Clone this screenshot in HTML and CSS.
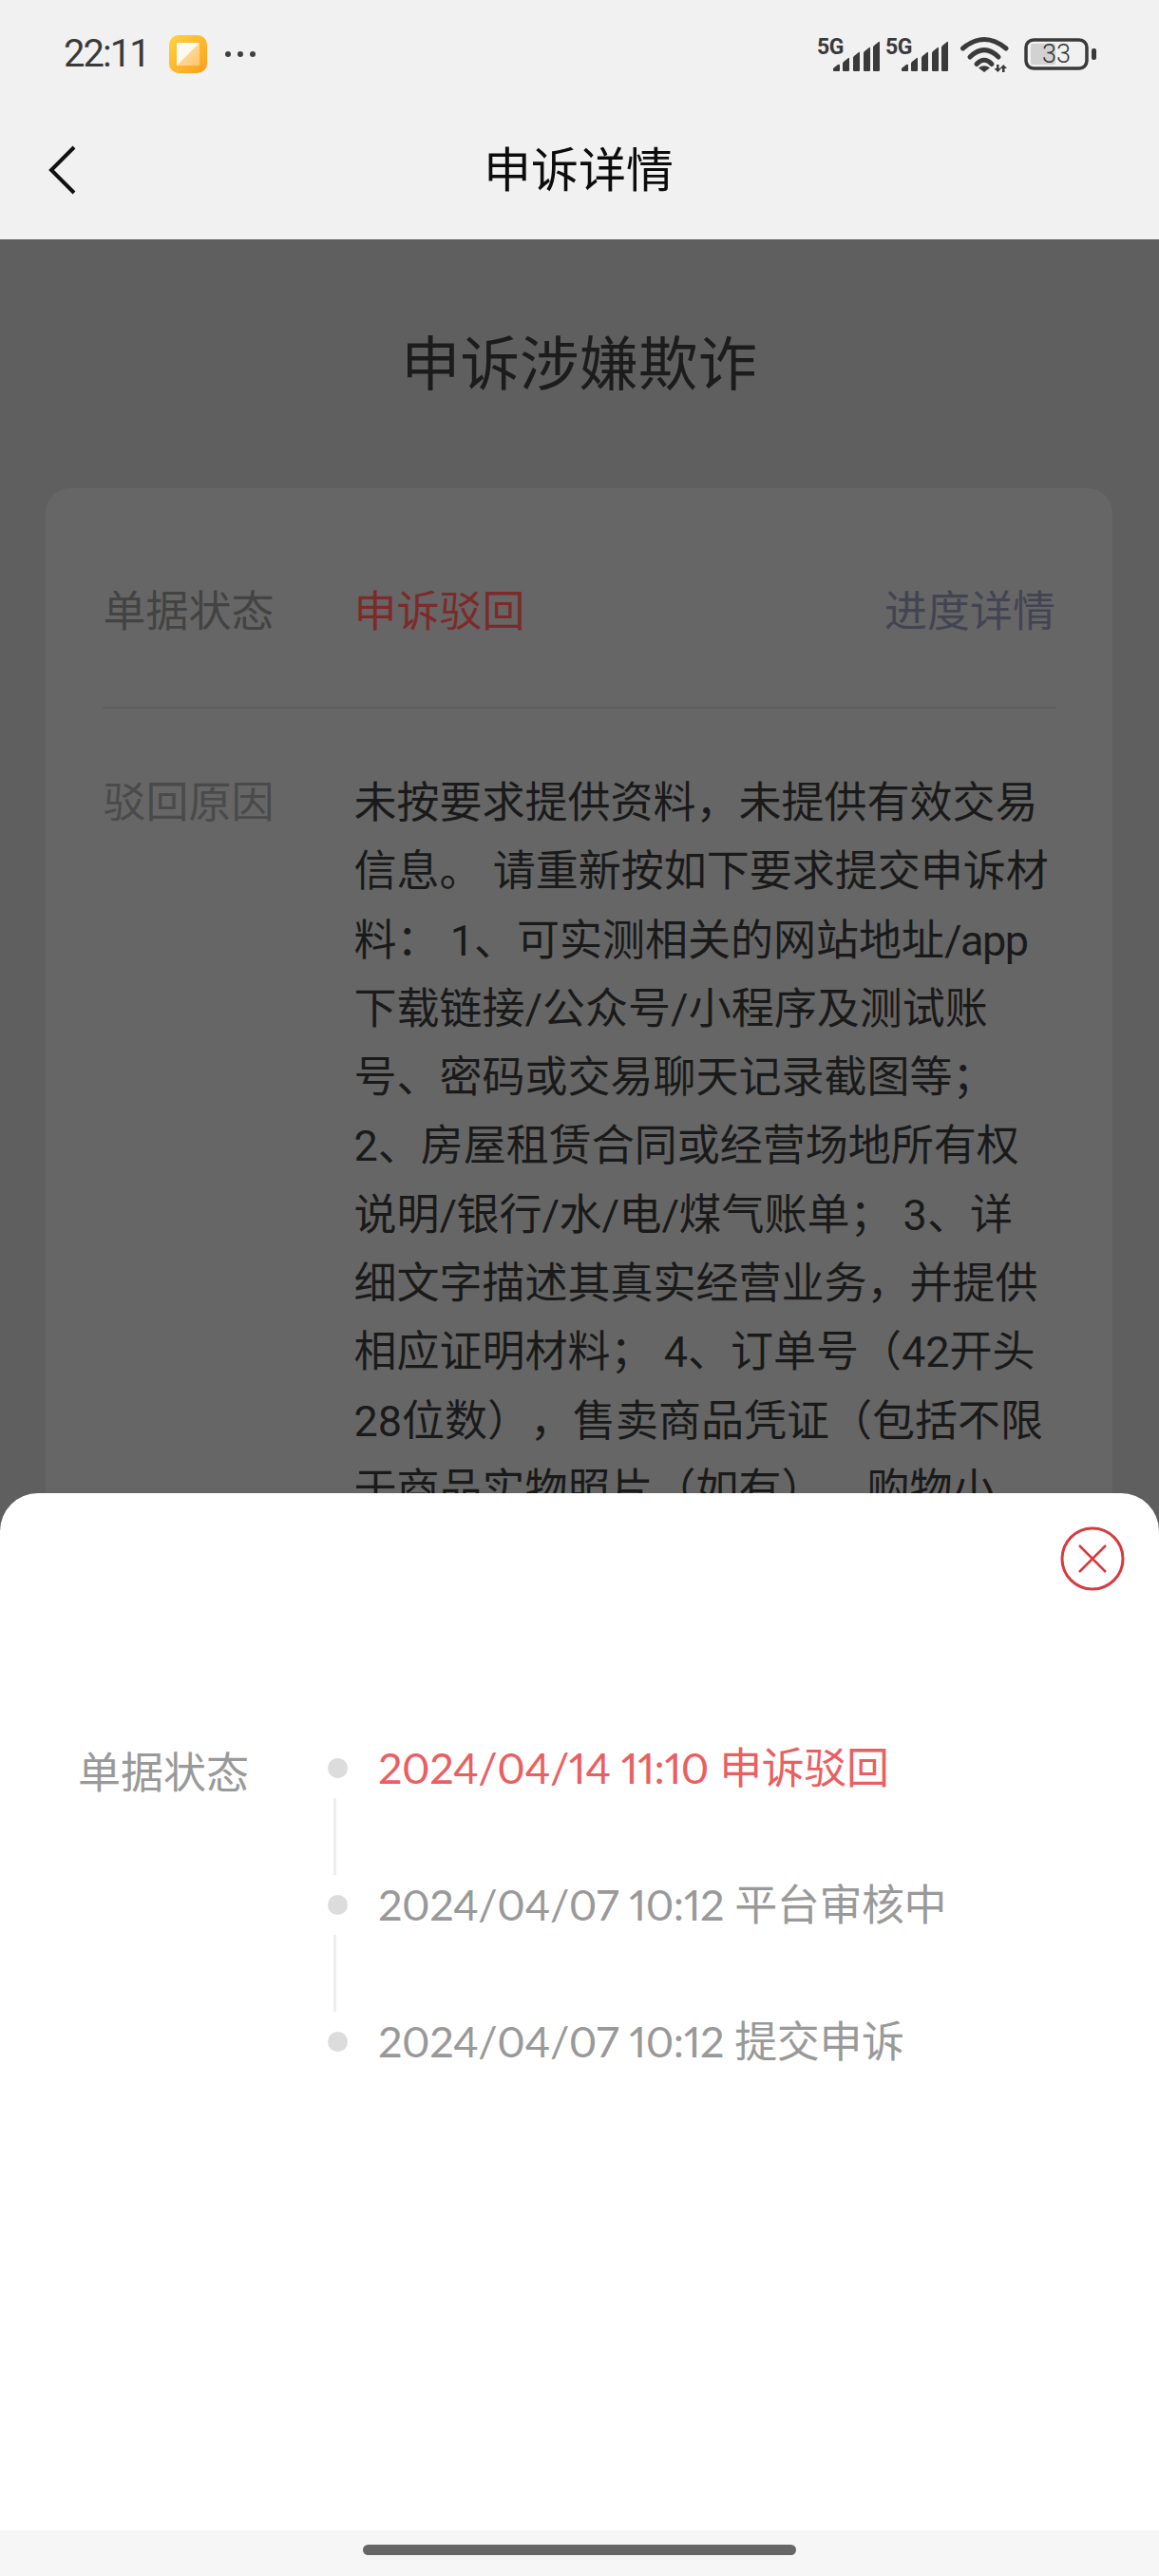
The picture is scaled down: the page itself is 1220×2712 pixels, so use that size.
FILE: index.html
```html
<!DOCTYPE html>
<html lang="zh-CN">
<head>
<meta charset="utf-8">
<title>申诉详情</title>
<link rel="stylesheet" href="styles.css">
</head>
<body>
<div class="phone">
  <header class="top">
    <div class="status">
      <div class="status-left">
        <span class="time">22:11</span>
        <svg class="app-icon" viewBox="0 0 40 40">
          <defs>
            <linearGradient id="appbg" x1="0" y1="0" x2="1" y2="1"><stop offset="0" stop-color="#ffd23f"/><stop offset="1" stop-color="#fd9f1c"/></linearGradient>
            <linearGradient id="appfold" x1="0" y1="0" x2="1" y2="1"><stop offset="0" stop-color="#ffe9bf"/><stop offset="1" stop-color="#ffc46a"/></linearGradient>
          </defs>
          <rect width="40" height="40" rx="10" fill="url(#appbg)"/>
          <rect x="8" y="8" width="24" height="24" fill="url(#appfold)"/>
          <path d="M8 8H32L8 32Z" fill="#fffaf0"/>
        </svg>
        <svg class="dots" viewBox="0 0 34 8"><circle cx="4" cy="4" r="3"/><circle cx="17" cy="4" r="3"/><circle cx="30" cy="4" r="3"/></svg>
      </div>
      <div class="status-right">
        <svg class="signal" viewBox="0 0 66 37">
          <text x="0" y="18" class="net">5G</text>
          <path d="M17 33l5-4q2-1 2 1v5q0 1-1 1h-5q-1 0-1-1z"/>
          <path d="M28 26l5-4q1-1 1 1v12q0 1-1 1h-5q-1 0-1-1v-7q0-1 1-2z"/>
          <path d="M39 20l5-4q1-1 1 1v18q0 1-1 1h-5q-1 0-1-1v-13q0-1 1-2z"/>
          <path d="M50 15l5-4q1-1 1 1v23q0 1-1 1h-5q-1 0-1-1v-18q0-1 1-2z"/>
          <path d="M60 9l5-4q1-1 1 1v29q0 1-1 1h-5q-1 0-1-1v-24q0-1 1-2z"/>
        </svg>
        <svg class="signal" viewBox="0 0 66 37">
          <text x="0" y="18" class="net">5G</text>
          <path d="M17 33l5-4q2-1 2 1v5q0 1-1 1h-5q-1 0-1-1z"/>
          <path d="M28 26l5-4q1-1 1 1v12q0 1-1 1h-5q-1 0-1-1v-7q0-1 1-2z"/>
          <path d="M39 20l5-4q1-1 1 1v18q0 1-1 1h-5q-1 0-1-1v-13q0-1 1-2z"/>
          <path d="M50 15l5-4q1-1 1 1v23q0 1-1 1h-5q-1 0-1-1v-18q0-1 1-2z"/>
          <path d="M60 9l5-4q1-1 1 1v29q0 1-1 1h-5q-1 0-1-1v-24q0-1 1-2z"/>
        </svg>
        <svg class="wifi" viewBox="0 0 52 38">
          <path class="arc" d="M2.5 13Q25-6 48 13"/>
          <path class="arc" d="M10 22Q25 7 40 22"/>
          <path class="arc" d="M17 29.500Q25 21 33 29.500"/>
          <path d="M19 33.500Q25 29 31 33.500L25 38Z"/>
          <path d="M38 30h2.500v4h2.500l-3.700 4-3.800-4h2.500zM44 38h2.500v-4h2.500l-3.700-4-3.800 4h2.500z"/>
        </svg>
        <svg class="battery" viewBox="0 0 76 34">
          <rect x="2" y="2" width="64" height="30" rx="8" class="shell"/>
          <rect x="7" y="6" width="26" height="22" rx="2" fill="#d2d2d2"/>
          <rect x="71" y="11" width="5" height="12" rx="2"/>
          <text x="34" y="26" class="level">33</text>
        </svg>
      </div>
    </div>
    <div class="navbar">
      <svg class="back" viewBox="0 0 30 52"><path d="M27 2L3 26L27 50"/></svg>
      <h1>申诉详情</h1>
    </div>
  </header>

  <main class="content">
    <h2>申诉涉嫌欺诈</h2>
    <section class="card">
      <div class="row row-status">
        <span class="label">单据状态</span>
        <span class="state">申诉驳回</span>
        <a class="progress">进度详情</a>
      </div>
      <div class="row row-reason">
        <span class="label label-faint">驳回原因</span>
        <p class="reason">未按要求提供资料，未提供有效交易<br>信息。 请重新按如下要求提交申诉材<br>料： 1、可实测相关的网站地址<span class="latin">/app</span><br>下载链接/公众号/小程序及测试账<br>号、密码或交易聊天记录截图等；<br>2、房屋租赁合同或经营场地所有权<br>说明<span class="slash">/</span>银行<span class="slash">/</span>水<span class="slash">/</span>电<span class="slash">/</span>煤气账单； 3、详<br>细文字描述其真实经营业务，并提供<br>相应证明材料； 4、订单号（42开头<br>28位数），售卖商品凭证（包括不限<br>于商品实物照片（如有）、购物小</p>
      </div>
    </section>
  </main>

  <aside class="sheet">
    <div class="sheet-head">
      <svg class="close" viewBox="0 0 68 68"><circle cx="34" cy="34" r="32"/><path d="M20 20L48 48M48 20L20 48"/></svg>
    </div>
    <div class="history">
      <span class="history-label">单据状态</span>
      <ol class="steps">
        <li class="step">
          <div class="rail"><i class="dot"></i><i class="line"></i></div>
          <span class="step-text step-now">2024/04/14 11:10 申诉驳回</span>
        </li>
        <li class="step">
          <div class="rail"><i class="dot"></i><i class="line"></i></div>
          <span class="step-text">2024/04/07 10:12 平台审核中</span>
        </li>
        <li class="step">
          <div class="rail"><i class="dot"></i></div>
          <span class="step-text">2024/04/07 10:12 提交申诉</span>
        </li>
      </ol>
    </div>
    <div class="gesture"><i class="home-bar"></i></div>
  </aside>
</div>
</body>
</html>
```
FILE: styles.css
```css
* { box-sizing: border-box; }
html, body { margin: 0; padding: 0; }
body {
  font-family: "Roboto", "Noto Sans CJK SC", sans-serif;
  background: #5f5f5f;
  text-spacing-trim: space-all;
}
.phone {
  position: relative;
  width: 1220px;
  height: 2712px;
  overflow: hidden;
  display: flex;
  flex-direction: column;
  background: #5f5f5f;
}

/* top bar */
.top { height: 252px; background: #f1f1f1; flex: none; }
.status {
  height: 104px;
  padding: 10px 66px 0 67px;
  display: flex;
  align-items: center;
  justify-content: space-between;
}
.status-left { display: flex; align-items: center; }
.time { font-size: 40px; letter-spacing: -2px; color: #3a3a3a; line-height: 40px; width: 111px; }
.app-icon { width: 40px; height: 40px; display: block; }
.dots { width: 34px; height: 8px; margin-left: 18px; fill: #3f3f3f; display: block; }
.status-right { display: flex; align-items: center; fill: #3a3a3a; }
.signal { width: 66px; height: 37px; margin-right: 6px; display: block; overflow: visible; }
.net { font: 700 23px "Roboto", sans-serif; letter-spacing: -0.5px; }
.wifi { width: 52px; height: 38px; margin-left: 7px; margin-right: 15px; display: block; overflow: visible; }
.arc { fill: none; stroke: #3a3a3a; stroke-width: 5px; stroke-linecap: round; }
.battery { width: 76px; height: 34px; display: block; }
.shell { fill: none; stroke: #3a3a3a; stroke-width: 3.5px; }
.level { font: 300 27px "Roboto", sans-serif; fill: #333; text-anchor: middle; }
.navbar {
  height: 148px;
  padding-top: 3px;
  position: relative;
  display: flex;
  align-items: center;
  justify-content: center;
}
.navbar h1 { margin: 0 2px 0 0; font-size: 50px; font-weight: 400; color: #0c0c0c; line-height: 60px; }
.back {
  position: absolute;
  left: 51px;
  top: 49px;
  width: 30px;
  height: 52px;
  fill: none;
  stroke: #111;
  stroke-width: 4px;
}

/* dimmed page */
.content { flex: 1; min-height: 0; overflow: hidden; padding: 93px 49px 0 48px; }
.content h2 {
  margin: 0 0 89px;
  font-size: 62.5px;
  font-weight: 400;
  line-height: 80px;
  color: #1c1c1c;
  text-align: center;
}
.card { background: #666; border-radius: 26px; padding: 0 59px 0 60px; }
.row { display: flex; font-size: 45px; }
.row-status {
  align-items: center;
  line-height: 60px;
  padding: 101px 0 69px;
  border-bottom: 2px solid #5e5e5e;
}
.label { width: 264.5px; flex: none; color: #434343; padding-left: 0.5px; }
.label-faint { color: #4a4a4a; }
.state { color: #7d2a2a; }
.progress { margin-left: auto; margin-right: 1px; color: #434452; }
.row-reason { padding-top: 64px; line-height: 72.3px; }
.reason { margin: 0; color: #1a1a1a; white-space: nowrap; }
.latin { letter-spacing: -1.5px; }
.slash { letter-spacing: -0.6px; }

/* bottom sheet */
.sheet {
  position: absolute;
  left: 0;
  right: 0;
  top: 1572px;
  bottom: 0;
  background: #fff;
  border-radius: 40px 40px 0 0;
  display: flex;
  flex-direction: column;
}
.sheet-head { display: flex; justify-content: flex-end; padding: 35px 36px 0 0; }
.close { width: 68px; height: 68px; fill: none; stroke: #d83a3f; display: block; }
.close circle { stroke-width: 3px; }
.close path { stroke-width: 2.5px; }
.history {
  display: flex;
  padding: 176px 0 0 82px;
}
.history-label {
  width: 263px;
  flex: none;
  font-size: 45px;
  line-height: 21px;
  padding-top: 5.5px;
  color: #999;
}
.steps { list-style: none; margin: 0; padding: 0; }
.step { display: flex; }
.rail { width: 21px; margin-right: 32px; flex: none; }
.dot { display: block; width: 21px; height: 21px; border-radius: 50%; background: #dcdcdc; }
.line { display: block; width: 3px; height: 81px; margin: 21px 0 21px 6px; background: #eee; }
.step-text {
  font-family: "Lato", "Noto Sans CJK SC", sans-serif;
  font-variant-numeric: proportional-nums;
  font-size: 45px;
  line-height: 21px;
  letter-spacing: -0.42px;
  color: #999;
  white-space: nowrap;
}
.step-now { color: #ea5f62; }
.gesture {
  margin-top: auto;
  height: 48px;
  padding-top: 15px;
  background: #f6f6f6;
  display: flex;
  justify-content: center;
}
.home-bar { display: block; width: 456px; height: 11px; border-radius: 6px; background: #666; }
```
